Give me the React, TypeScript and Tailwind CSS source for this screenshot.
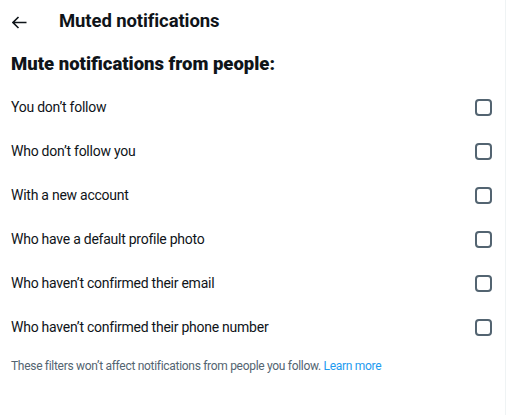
import React from "react";

const options = [
  "You don’t follow",
  "Who don’t follow you",
  "With a new account",
  "Who have a default profile photo",
  "Who haven’t confirmed their email",
  "Who haven’t confirmed their phone number",
];

export default function App() {
  const [checked, setChecked] = React.useState<boolean[]>(options.map(() => false));
  return (
    <div
      className="h-[415px] w-[507px] overflow-hidden bg-white text-[#0f1419]"
      style={{ fontFamily: "Roboto, 'Noto Sans', sans-serif" }}
    >
      <div className="h-full w-[506px] border-r border-[#eff3f4]">
        <div className="flex h-[41px] items-center pt-[3px]">
          <div className="flex w-[59px] items-center pl-[12px]">
            <svg width="15" height="13" viewBox="0 0 15 13" fill="none">
              <path d="M1 6.5h13.5M6.5 1L1 6.5 6.5 12" stroke="#0f1419" strokeWidth="1.6" />
            </svg>
          </div>
          <h1 className="text-[18.5px] font-bold tracking-[-0.1px]">Muted notifications</h1>
        </div>
        <h2 className="mt-[10px] px-[11px] text-[18.5px] leading-[26px] font-black">
          Mute notifications from people:
        </h2>
        <div className="mt-[8px]">
          {options.map((label, i) => (
            <label key={label} className="flex h-[44px] cursor-pointer items-center justify-between pl-[11px] pr-[13px]">
              <span className="text-[14px] tracking-[-0.25px]">{label}</span>
              <button
                type="button"
                onClick={() =>
                  setChecked((c) => c.map((v, j) => (j === i ? !v : v)))
                }
                className={
                  checked[i]
                    ? "h-[17px] w-[17px] rounded-[4px] border-2 border-[#1d9bf0] bg-[#1d9bf0]"
                    : "h-[17px] w-[17px] rounded-[4px] border-2 border-[#536471]"
                }
              />
            </label>
          ))}
        </div>
        <p className="mt-[8px] px-[11px] text-[12px] tracking-[-0.3px] text-[#536471]">
          These filters won’t affect notifications from people you follow.{" "}
          <span className="text-[#1d9bf0]">Learn more</span>
        </p>
      </div>
    </div>
  );
}
